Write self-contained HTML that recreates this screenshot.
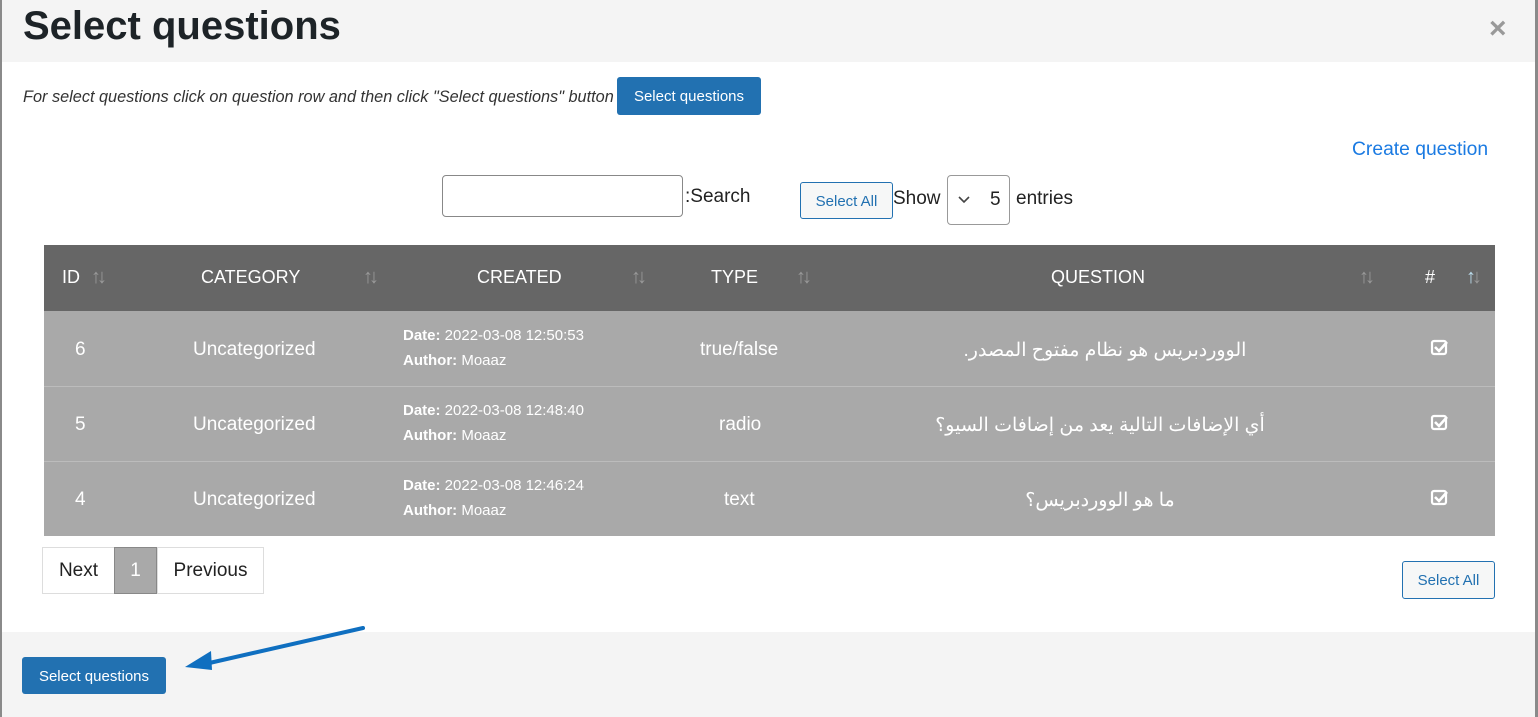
<!DOCTYPE html>
<html><head><meta charset="utf-8"><style>
*{box-sizing:border-box;margin:0;padding:0}
body{width:1538px;height:717px;position:relative;overflow:hidden;background:#fff;font-family:"Liberation Sans","Noto Sans CJK SC",sans-serif;color:#222}
.a{position:absolute;white-space:nowrap}
.btn{background:#2271b1;color:#fff;border-radius:3px;font-size:15px;text-align:center}
.th{color:#fff;font-size:18px;top:267px}
.ar{color:#999;font-size:20px;top:266px;letter-spacing:-4px}
.td{color:#fff;font-size:19px}
.sm{color:#fff;font-size:15px}
</style></head><body>
<div class="a" style="left:0;top:0;width:1538px;height:62px;background:#f4f4f4"></div>
<div class="a" style="left:0;top:632px;width:1538px;height:85px;background:#f4f4f4"></div>
<div class="a" style="left:0;top:0;width:2px;height:717px;background:#8a8a8a"></div>
<div class="a" style="left:1535px;top:0;width:3px;height:717px;background:#8a8a8a"></div>
<div class="a" style="left:23px;top:4px;font-size:40px;font-weight:bold;color:#1d2327">Select questions</div>
<div class="a" style="left:1489px;top:12px;font-size:30px;font-weight:bold;color:#999">×</div>
<div class="a" style="left:23px;top:88px;font-size:16.3px;font-style:italic;color:#333">For select questions click on question row and then click "Select questions" button</div>
<div class="a btn" style="left:617px;top:77px;width:144px;height:38px;line-height:40px">Select questions</div>
<div class="a" style="left:1352px;top:139px;font-size:19.3px;color:#1a7ae2">Create question</div>
<div class="a" style="left:442px;top:175px;width:241px;height:42px;border:1px solid #888;border-radius:4px"></div>
<div class="a" style="left:685px;top:186px;font-size:19px;color:#222">:Search</div>
<div class="a" style="left:800px;top:182px;width:93px;height:37px;border:1px solid #2271b1;border-radius:3px;background:#f6f7f7;color:#2271b1;font-size:15px;text-align:center;line-height:38px">Select All</div>
<div class="a" style="left:893px;top:188px;font-size:19px">Show</div>
<div class="a" style="left:947px;top:175px;width:63px;height:50px;border:1px solid #999;border-radius:4px"></div>
<svg class="a" style="left:958px;top:196px" width="12" height="8"><path d="M1 1l5 5 5-5" fill="none" stroke="#444" stroke-width="1.6"/></svg>
<div class="a" style="left:990px;top:189px;font-size:19px">5</div>
<div class="a" style="left:1016px;top:188px;font-size:19px">entries</div>
<div class="a" style="left:44px;top:245px;width:1451px;height:66px;background:#666"></div>
<div class="a" style="left:44px;top:311px;width:1451px;height:225px;background:#a9a9a9"></div>
<div class="a" style="left:44px;top:386px;width:1451px;height:1px;background:#bcbcbc"></div>
<div class="a" style="left:44px;top:461px;width:1451px;height:1px;background:#bcbcbc"></div>
<div class="a th" style="left:62px">ID</div><div class="a ar" style="left:91px">↑↓</div>
<div class="a th" style="left:201px">CATEGORY</div><div class="a ar" style="left:363px">↑↓</div>
<div class="a th" style="left:477px">CREATED</div><div class="a ar" style="left:631px">↑↓</div>
<div class="a th" style="left:711px">TYPE</div><div class="a ar" style="left:796px">↑↓</div>
<div class="a th" style="left:1051px">QUESTION</div><div class="a ar" style="left:1359px">↑↓</div>
<div class="a th" style="left:1425px">#</div><div class="a ar" style="left:1466px"><span style="color:#bde">↑</span>↓</div>
<div class="a td" style="left:75px;top:339px">6</div>
<div class="a td" style="left:193px;top:339px">Uncategorized</div>
<div class="a sm" style="left:403px;top:327px"><b>Date:</b> 2022-03-08 12:50:53</div>
<div class="a sm" style="left:403px;top:352px"><b>Author:</b> Moaaz</div>
<div class="a td" style="left:700px;top:339px">true/false</div>
<div class="a td" style="left:960px;top:339px;direction:rtl;width:290px;text-align:center">الووردبريس هو نظام مفتوح المصدر.</div>
<div class="a td" style="left:75px;top:414px">5</div>
<div class="a td" style="left:193px;top:414px">Uncategorized</div>
<div class="a sm" style="left:403px;top:402px"><b>Date:</b> 2022-03-08 12:48:40</div>
<div class="a sm" style="left:403px;top:427px"><b>Author:</b> Moaaz</div>
<div class="a td" style="left:719px;top:414px">radio</div>
<div class="a td" style="left:920px;top:414px;direction:rtl;width:360px;text-align:center">أي الإضافات التالية يعد من إضافات السيو؟</div>
<div class="a td" style="left:75px;top:489px">4</div>
<div class="a td" style="left:193px;top:489px">Uncategorized</div>
<div class="a sm" style="left:403px;top:477px"><b>Date:</b> 2022-03-08 12:46:24</div>
<div class="a sm" style="left:403px;top:502px"><b>Author:</b> Moaaz</div>
<div class="a td" style="left:724px;top:489px">text</div>
<div class="a td" style="left:1010px;top:489px;direction:rtl;width:180px;text-align:center">ما هو الووردبريس؟</div>
<svg class="a" style="left:0;top:0" width="1538" height="717">
<g fill="none" stroke="#fff" stroke-width="2.2">
<rect x="1432" y="341" width="14" height="13" rx="2"/><path d="M1435 347l4 4 8-9" stroke-width="2.6"/>
<rect x="1432" y="416" width="14" height="13" rx="2"/><path d="M1435 422l4 4 8-9" stroke-width="2.6"/>
<rect x="1432" y="491" width="14" height="13" rx="2"/><path d="M1435 497l4 4 8-9" stroke-width="2.6"/>
</g>
<line x1="363" y1="628" x2="205" y2="664" stroke="#0f6fc0" stroke-width="4" stroke-linecap="round"/><polygon points="185,667 211,651 212,670" fill="#0f6fc0"/></svg>
<div class="a" style="left:42px;top:547px;width:73px;height:47px;border:1px solid #ddd;font-size:19px;text-align:center;line-height:46px">Next</div>
<div class="a" style="left:114px;top:547px;width:43px;height:47px;border:1px solid #888;background:#a9a9a9;color:#fff;font-size:19px;text-align:center;line-height:46px">1</div>
<div class="a" style="left:157px;top:547px;width:107px;height:47px;border:1px solid #ddd;font-size:19px;text-align:center;line-height:46px">Previous</div>
<div class="a" style="left:1402px;top:561px;width:93px;height:38px;border:1px solid #2271b1;border-radius:3px;background:#f6f7f7;color:#2271b1;font-size:15px;text-align:center;line-height:38px">Select All</div>
<div class="a btn" style="left:22px;top:657px;width:144px;height:37px;line-height:39px">Select questions</div>
</body></html>
